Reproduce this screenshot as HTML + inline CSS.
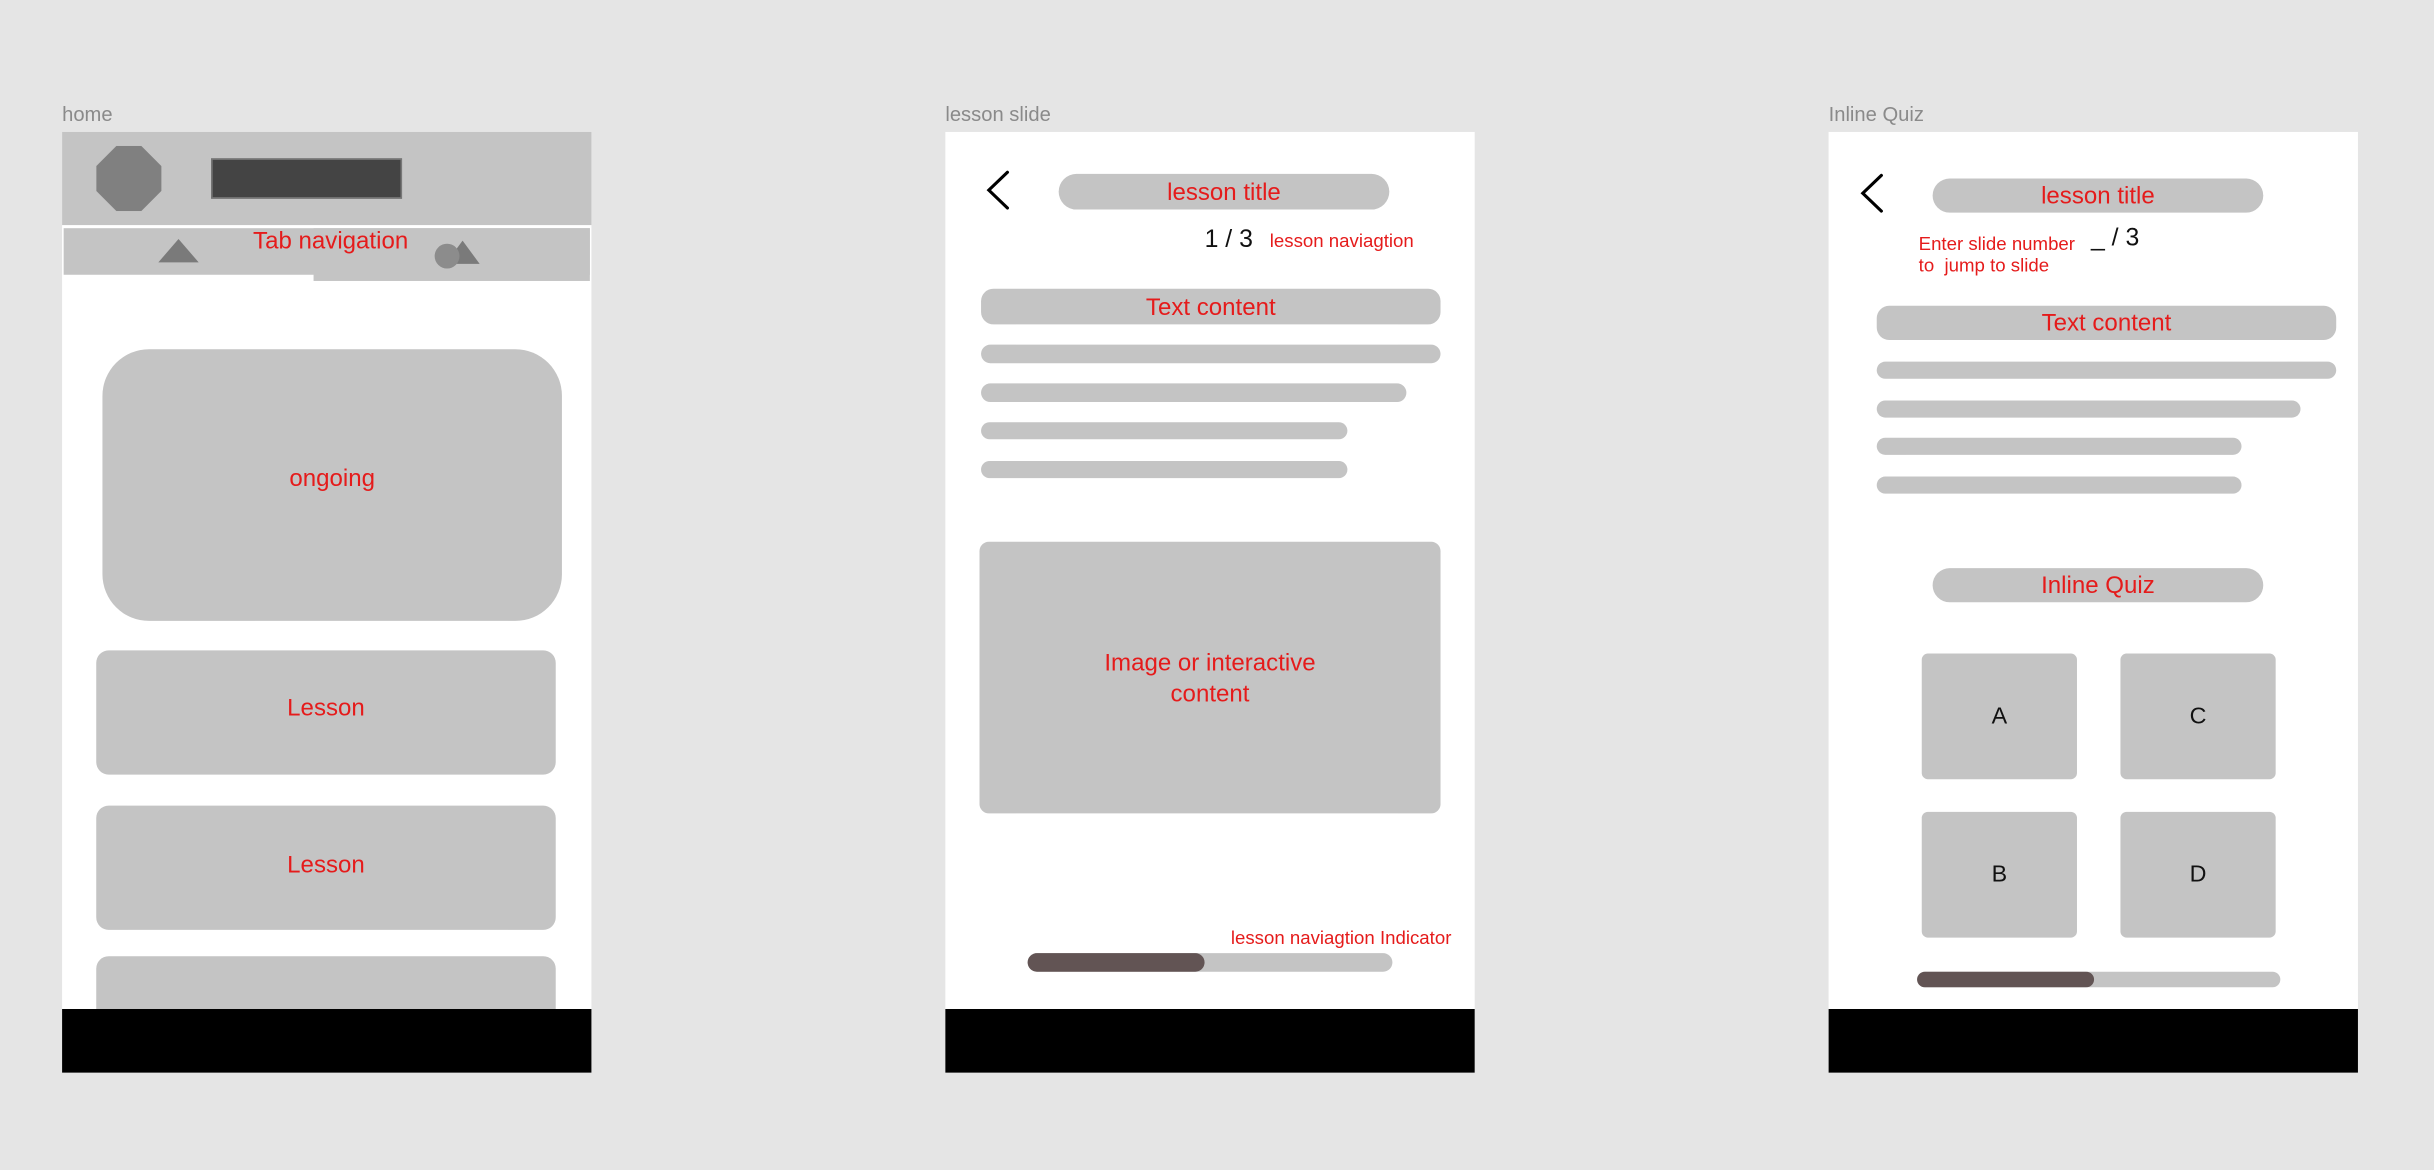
<!DOCTYPE html>
<html><head><meta charset="utf-8"><style>
html,body{margin:0;padding:0;background:#e5e5e5;width:2434px;height:1170px;overflow:hidden}
#s{position:absolute;left:0;top:0;width:1568px;height:754px;transform:scale(1.55230);transform-origin:0 0;font-family:"Liberation Sans",sans-serif}
#s div{position:absolute;box-sizing:border-box}
.g{background:#c4c4c4}
.r{color:#e51b1b}
.t{display:flex;align-items:center;justify-content:center;text-align:center}
.lbl{color:#8a8a8a;font-size:13px}
.w{background:#fff}
.blk{background:#000}
.f{font-size:15.5px}
.p{padding-top:2px}
</style></head><body><div id="s">
<div class="lbl" style="left:40px;top:66px">home</div>
<div class="lbl" style="left:609px;top:66px">lesson slide</div>
<div class="lbl" style="left:1178px;top:66px">Inline Quiz</div>

<!-- HOME -->
<div class="w" style="left:40px;top:85px;width:341px;height:606px"></div>
<div class="g" style="left:40px;top:85px;width:341px;height:60px"></div>
<svg style="position:absolute;left:62px;top:94px" width="42" height="42" viewBox="0 0 42 42"><polygon points="13,0 29,0 42,13 42,29 29,42 13,42 0,29 0,13" fill="#808080"/></svg>
<div style="left:136px;top:102px;width:123px;height:26px;background:#444;border:1px solid #777"></div>
<div class="g" style="left:41px;top:147px;width:339px;height:30px"></div>
<div class="g" style="left:202px;top:147px;width:178px;height:34px"></div>
<svg style="position:absolute;left:102px;top:154px" width="26" height="16"><polygon points="13,0 26,15 0,15" fill="#7a7a7a"/></svg>
<svg style="position:absolute;left:279px;top:155px" width="32" height="20"><polygon points="19,0 30,15 8,15" fill="#7a7a7a"/><circle cx="9" cy="10" r="8" fill="#8c8c8c"/></svg>
<div class="r f" style="left:140px;top:147px;width:146px;text-align:center">Tab navigation</div>
<div class="g t r f" style="left:66px;top:225px;width:296px;height:175px;border-radius:30px;padding-bottom:8px">ongoing</div>
<div class="g t r f" style="left:62px;top:419px;width:296px;height:80px;border-radius:8px;padding-bottom:4px">Lesson</div>
<div class="g t r f" style="left:62px;top:519px;width:296px;height:80px;border-radius:8px;padding-bottom:2px">Lesson</div>
<div class="g" style="left:62px;top:616px;width:296px;height:40px;border-radius:8px 8px 0 0"></div>
<div class="blk" style="left:40px;top:650px;width:341px;height:41px"></div>

<!-- LESSON SLIDE -->
<div class="w" style="left:609px;top:85px;width:341px;height:606px"></div>
<svg style="position:absolute;left:634px;top:109px" width="18" height="27"><polyline points="15,2 3,13.5 15,25" fill="none" stroke="#000" stroke-width="2" stroke-linecap="round"/></svg>
<div class="g t r f p" style="left:682px;top:112px;width:213px;height:23px;border-radius:12px">lesson title</div>
<div style="left:776px;top:146px;font-size:16px;color:#111">1 / 3</div>
<div class="r" style="left:818px;top:148px;font-size:12px">lesson naviagtion</div>
<div class="g t r f p" style="left:632px;top:186px;width:296px;height:23px;border-radius:8px">Text content</div>
<div class="g" style="left:632px;top:222px;width:296px;height:12px;border-radius:6px"></div>
<div class="g" style="left:632px;top:247px;width:274px;height:12px;border-radius:6px"></div>
<div class="g" style="left:632px;top:272px;width:236px;height:11px;border-radius:6px"></div>
<div class="g" style="left:632px;top:297px;width:236px;height:11px;border-radius:6px"></div>
<div class="g t r f" style="left:631px;top:349px;width:297px;height:175px;border-radius:6px;line-height:20px;padding-top:3px">Image or interactive<br>content</div>
<div class="r" style="left:700px;top:597px;width:235px;text-align:right;font-size:12px">lesson naviagtion Indicator</div>
<div class="g" style="left:662px;top:614px;width:235px;height:12px;border-radius:6px"></div>
<div style="left:662px;top:614px;width:114px;height:12px;border-radius:6px;background:#625454"></div>
<div class="blk" style="left:609px;top:650px;width:341px;height:41px"></div>

<!-- QUIZ -->
<div class="w" style="left:1178px;top:85px;width:341px;height:606px"></div>
<svg style="position:absolute;left:1197px;top:111px" width="18" height="27"><polyline points="15,2 3,13.5 15,25" fill="none" stroke="#000" stroke-width="2" stroke-linecap="round"/></svg>
<div class="g t r f p" style="left:1245px;top:115px;width:213px;height:22px;border-radius:11px">lesson title</div>
<div class="r" style="left:1236px;top:150px;font-size:12px;line-height:14px">Enter slide number<br>to&nbsp; jump to slide</div>
<div style="left:1347px;top:145px;font-size:16px;color:#111">_ / 3</div>
<div class="g t r f p" style="left:1209px;top:197px;width:296px;height:22px;border-radius:8px">Text content</div>
<div class="g" style="left:1209px;top:233px;width:296px;height:11px;border-radius:6px"></div>
<div class="g" style="left:1209px;top:258px;width:273px;height:11px;border-radius:6px"></div>
<div class="g" style="left:1209px;top:282px;width:235px;height:11px;border-radius:6px"></div>
<div class="g" style="left:1209px;top:307px;width:235px;height:11px;border-radius:6px"></div>
<div class="g t r f p" style="left:1245px;top:366px;width:213px;height:22px;border-radius:11px">Inline Quiz</div>
<div class="g t" style="left:1238px;top:421px;width:100px;height:81px;border-radius:4px;font-size:15px;color:#111">A</div>
<div class="g t" style="left:1366px;top:421px;width:100px;height:81px;border-radius:4px;font-size:15px;color:#111">C</div>
<div class="g t" style="left:1238px;top:523px;width:100px;height:81px;border-radius:4px;font-size:15px;color:#111">B</div>
<div class="g t" style="left:1366px;top:523px;width:100px;height:81px;border-radius:4px;font-size:15px;color:#111">D</div>
<div class="g" style="left:1235px;top:626px;width:234px;height:10px;border-radius:5px"></div>
<div style="left:1235px;top:626px;width:114px;height:10px;border-radius:5px;background:#625454"></div>
<div class="blk" style="left:1178px;top:650px;width:341px;height:41px"></div>
</div></body></html>
